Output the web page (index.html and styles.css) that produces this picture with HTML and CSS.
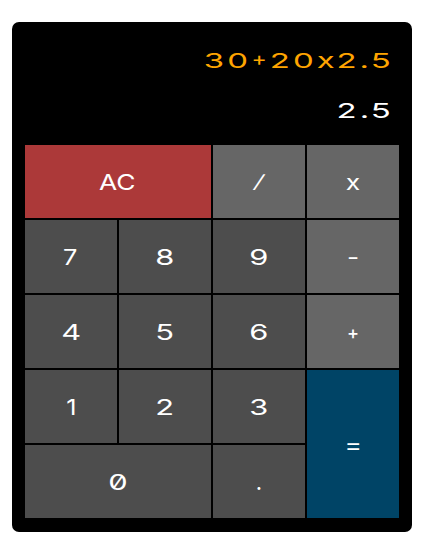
FILE: index.html
```
<!DOCTYPE html>
<html lang="en">
<head>
<meta charset="utf-8">
<title>Calculator</title>
<link rel="stylesheet" href="styles.css">
</head>
<body>
<main class="calculator">
  <div class="display">
    <div class="line formula"><span class="stretch">30<span class="plus">+</span>20<span class="times">x</span>2<span class="dot">.</span>5</span></div>
    <div class="line output"><span class="stretch">2<span class="dot">.</span>5</span></div>
  </div>
  <div class="keys">
    <button class="wide clear"><span class="letters">AC</span></button>
    <button class="operator"><span class="slash">/</span></button>
    <button class="operator"><span class="cross">x</span></button>
    <button><span class="seven">7</span></button>
    <button><span>8</span></button>
    <button><span>9</span></button>
    <button class="operator"><span class="minus">-</span></button>
    <button><span>4</span></button>
    <button><span>5</span></button>
    <button><span>6</span></button>
    <button class="operator"><span class="add">+</span></button>
    <button><span class="one">1</span></button>
    <button><span>2</span></button>
    <button><span>3</span></button>
    <button class="equals"><span class="equal">=</span></button>
    <button class="wide"><span class="zero">0</span></button>
    <button><span class="point">.</span></button>
  </div>
</main>
</body>
</html>
```
FILE: styles.css
```
* { box-sizing: border-box; }
body {
  margin: 0;
  background: #fff;
  font-family: Inter, "Liberation Sans", sans-serif;
  font-weight: 400;
}
.calculator {
  width: 400px;
  height: 510px;
  margin: 22px 0 0 12px;
  padding: 13px;
  background: #000;
  border-radius: 7px;
}
.display {
  height: 110px;
  padding-right: 8px;
}
.line {
  display: flex;
  height: 50px;
  align-items: center;
  justify-content: flex-end;
  font-size: 20.6px;
  white-space: nowrap;
}
.formula { color: orange; }
.output { color: #fff; }
.stretch {
  display: inline-block;
  transform: scaleX(1.6);
  transform-origin: right center;
  letter-spacing: 1.9px;
  margin-right: -3px;
}
.plus, .times, .dot {
  display: inline-block;
  letter-spacing: 0;
}
.plus {
  margin: 0 1.5px 0 -1px;
  font-size: 17px;
  line-height: 17px;
  transform: translateY(-3px) scale(0.85, 1.15);
}
.times { margin-right: 1px; }
.dot { margin-right: 1px; }
.keys {
  display: grid;
  grid-template-columns: repeat(4, 92px);
  grid-template-rows: repeat(5, 73px);
  gap: 2px;
}
button {
  display: flex;
  align-items: center;
  justify-content: center;
  padding: 0;
  border: 0;
  background: #4d4d4d;
  color: #fff;
  font: inherit;
  font-size: 22px;
}
button span {
  display: inline-block;
  transform: scaleX(1.4);
}
button.wide { grid-column: span 2; }
button.clear { background: #ac3939; }
button.operator { background: #666; }
button.equals {
  grid-column: 4;
  grid-row: 4 / 6;
  background: #046;
}
button .letters { transform: translateX(-1px) scaleX(1.2); }
button .slash {
  font-size: 18px;
  font-weight: 600;
  transform: skewX(-22deg);
}
button .cross { transform: scaleX(1.2); }
button .seven { transform: translateX(-1px) scaleX(1.15); }
button .zero { font-feature-settings: "zero"; }
button .one { transform: scaleX(1.15); }
button .minus { transform: scaleX(1.2); }
button .add {
  font-size: 18px;
  font-weight: 500;
  transform: translateY(1px);
}
button .equal { transform: translateY(1px) scaleX(1.2); }
button .point { transform: none; }
```
